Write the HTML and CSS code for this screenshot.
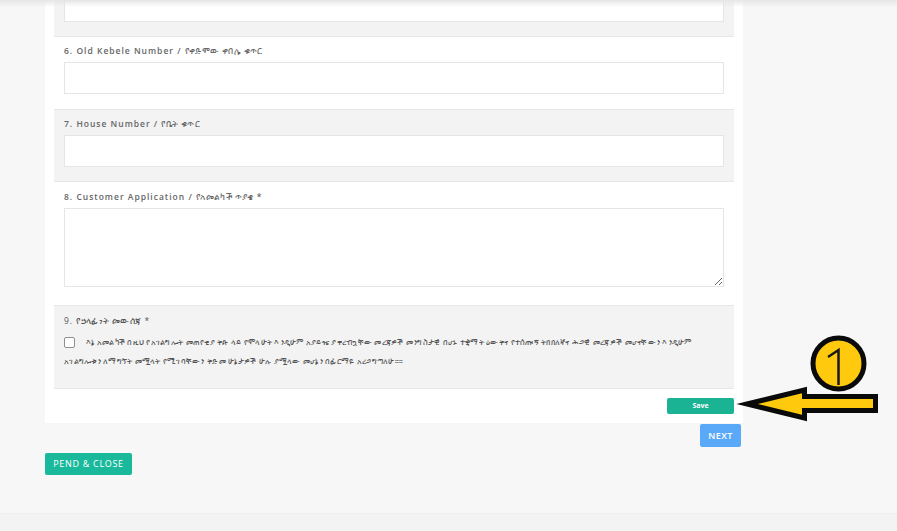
FILE: index.html
```html
<!DOCTYPE html>
<html lang="am">
<head>
<meta charset="utf-8">
<title>Application form</title>
<link rel="stylesheet" href="styles.css">
</head>
<body>
<div class="top-shadow"></div>
<main class="page">
  <form class="card">
    <div class="row alt row-first">
      <input class="field field-first" type="text">
    </div>
    <div class="row row-six">
      <label class="label">6. Old Kebele Number / <span class="am">የቀድሞው ቀበሌ ቁጥር</span></label>
      <input class="field" type="text">
    </div>
    <div class="row alt">
      <label class="label">7. House Number / <span class="am">የቤት ቁጥር</span></label>
      <input class="field" type="text">
    </div>
    <div class="row row-area">
      <label class="label">8. Customer Application / <span class="am">የአመልካች ጥያቄ</span> *</label>
      <textarea class="field area"></textarea>
    </div>
    <div class="row alt row-terms">
      <label class="label label-terms">9. <span class="am">የኃላፊነት መውሰጃ</span> *</label>
      <p class="terms"><input class="check" type="checkbox">እኔ አመልካች በዚህ የአገልግሎት መጠየቂያ ቅጽ ላይ የሞላሁት እንዲሁም አያይዤ ያቀረብኳቸው መረጃዎች መንግስታዊ በሆኑ ተቋማት ዕውቅና የተሰጡኝ ትክክለኛና ሕጋዊ መረጃዎች መሆናቸውን እንዲሁም<br>አገልግሎቱን ለማግኘት መሟላት የሚገባቸውን ቅድመ ሁኔታዎች ሁሉ ያሟላው መሆኔን በፊርማዬ አረጋግጣለሁ።።</p>
    </div>
    <div class="save-row">
      <button class="btn-save" type="button">Save</button>
    </div>
  </form>
  <div class="next-row">
    <button class="btn-next" type="button">NEXT</button>
  </div>
  <div class="pend-row">
    <button class="btn-pend" type="button">PEND &amp; CLOSE</button>
  </div>
</main>
<footer class="footer"></footer>
<svg class="callout" width="160" height="100" viewBox="0 0 160 100" aria-hidden="true">
  <circle cx="103.5" cy="33.5" r="25.5" fill="#ffc90e" stroke="#0a0a0a" stroke-width="5"/>
  <path d="M93 27 L103.5 20 L103.5 55" fill="none" stroke="#1a1a1a" stroke-width="2.5"/>
  <path d="M12 74 L69.5 60 L69.5 66.5 L140.5 66.5 L140.5 80.5 L69.5 80.5 L69.5 88 Z" fill="#ffc90e" stroke="#0a0a0a" stroke-width="5" stroke-linejoin="miter" stroke-miterlimit="10"/>
</svg>
</body>
</html>
```
FILE: styles.css
```css
* { box-sizing: border-box; }
html, body { margin: 0; padding: 0; height: 531px; overflow: hidden; }
body {
  background: #f7f7f7;
  font-family: "Open Sans", "Noto Sans", "DejaVu Sans", sans-serif;
  position: relative;
}
.top-shadow {
  position: absolute;
  top: 0; left: 0; right: 0;
  height: 7px;
  background: linear-gradient(#e6e6e6, rgba(235,235,235,0));
  z-index: 2;
}
.page { height: 513px; padding-left: 45px; }
.card { width: 698px; background: #fff; padding: 0 9px; }
.row {
  padding: 9px 10px 14px;
  border-bottom: 1px solid #e7e7e7;
  height: 72px;
}
.alt { background: #f3f3f3; }
.row-first { height: 37px; padding: 0 10px; }
.row-six { height: 73px; padding-top: 9px; }
.field {
  display: block;
  width: 660px;
  height: 32px;
  background: #fff;
  border: 1px solid #e5e5e5;
  margin: 0;
  border-radius: 0;
}
.field-first { height: 22px; }
.row-area { height: 124px; padding-top: 10px; }
.row .area { height: 79px; resize: both; }
.label {
  display: block;
  height: 16px;
  font-size: 8.5px;
  line-height: 9px;
  font-weight: 600;
  letter-spacing: 1px;
  color: #666;
}
.am { letter-spacing: 0.35px; font-weight: 400; }
.row-terms { height: 83px; padding-top: 9px; }
.label-terms { font-weight: 400; height: 11px; line-height: 11px; color: #555; }
.terms {
  margin: 6px 0 0;
  font-size: 8px;
  letter-spacing: 0.25px;
  line-height: 19px;
  color: #555;
  white-space: nowrap;
}
.check {
  width: 11px; height: 11px;
  margin: 0 11px 0 0;
  vertical-align: middle;
  appearance: none;
  background: #fff;
  border: 1px solid #8f8f8f;
  border-radius: 2px;
}
.save-row {
  height: 34px;
  display: flex;
  justify-content: flex-end;
  align-items: flex-start;
  padding-top: 9px;
}
.btn-save {
  width: 67px; height: 16px;
  background: #1ab394;
  border: 0;
  border-radius: 2px;
  color: #fff;
  font: 700 7px/16px "Open Sans", sans-serif;
  padding: 0;
}
.next-row { width: 696px; display: flex; justify-content: flex-end; padding-top: 1px; }
.btn-next {
  width: 41px; height: 23px;
  background: #5aa9f8;
  border: 0;
  border-radius: 2px;
  color: #fff;
  font: 600 9px/23px "Open Sans", sans-serif;
  letter-spacing: 0.4px;
  padding: 0;
}
.pend-row { padding-top: 6px; }
.btn-pend {
  display: block;
  width: 87px; height: 22px;
  background: #1ab99b;
  border: 0;
  border-radius: 2px;
  color: #fff;
  font: 400 9px/22px "Open Sans", sans-serif;
  letter-spacing: 0.7px;
  padding: 0;
}
.footer { height: 18px; background: #f3f3f3; border-top: 1px solid #ededed; }
.callout { position: absolute; left: 735px; top: 330px; }
```
